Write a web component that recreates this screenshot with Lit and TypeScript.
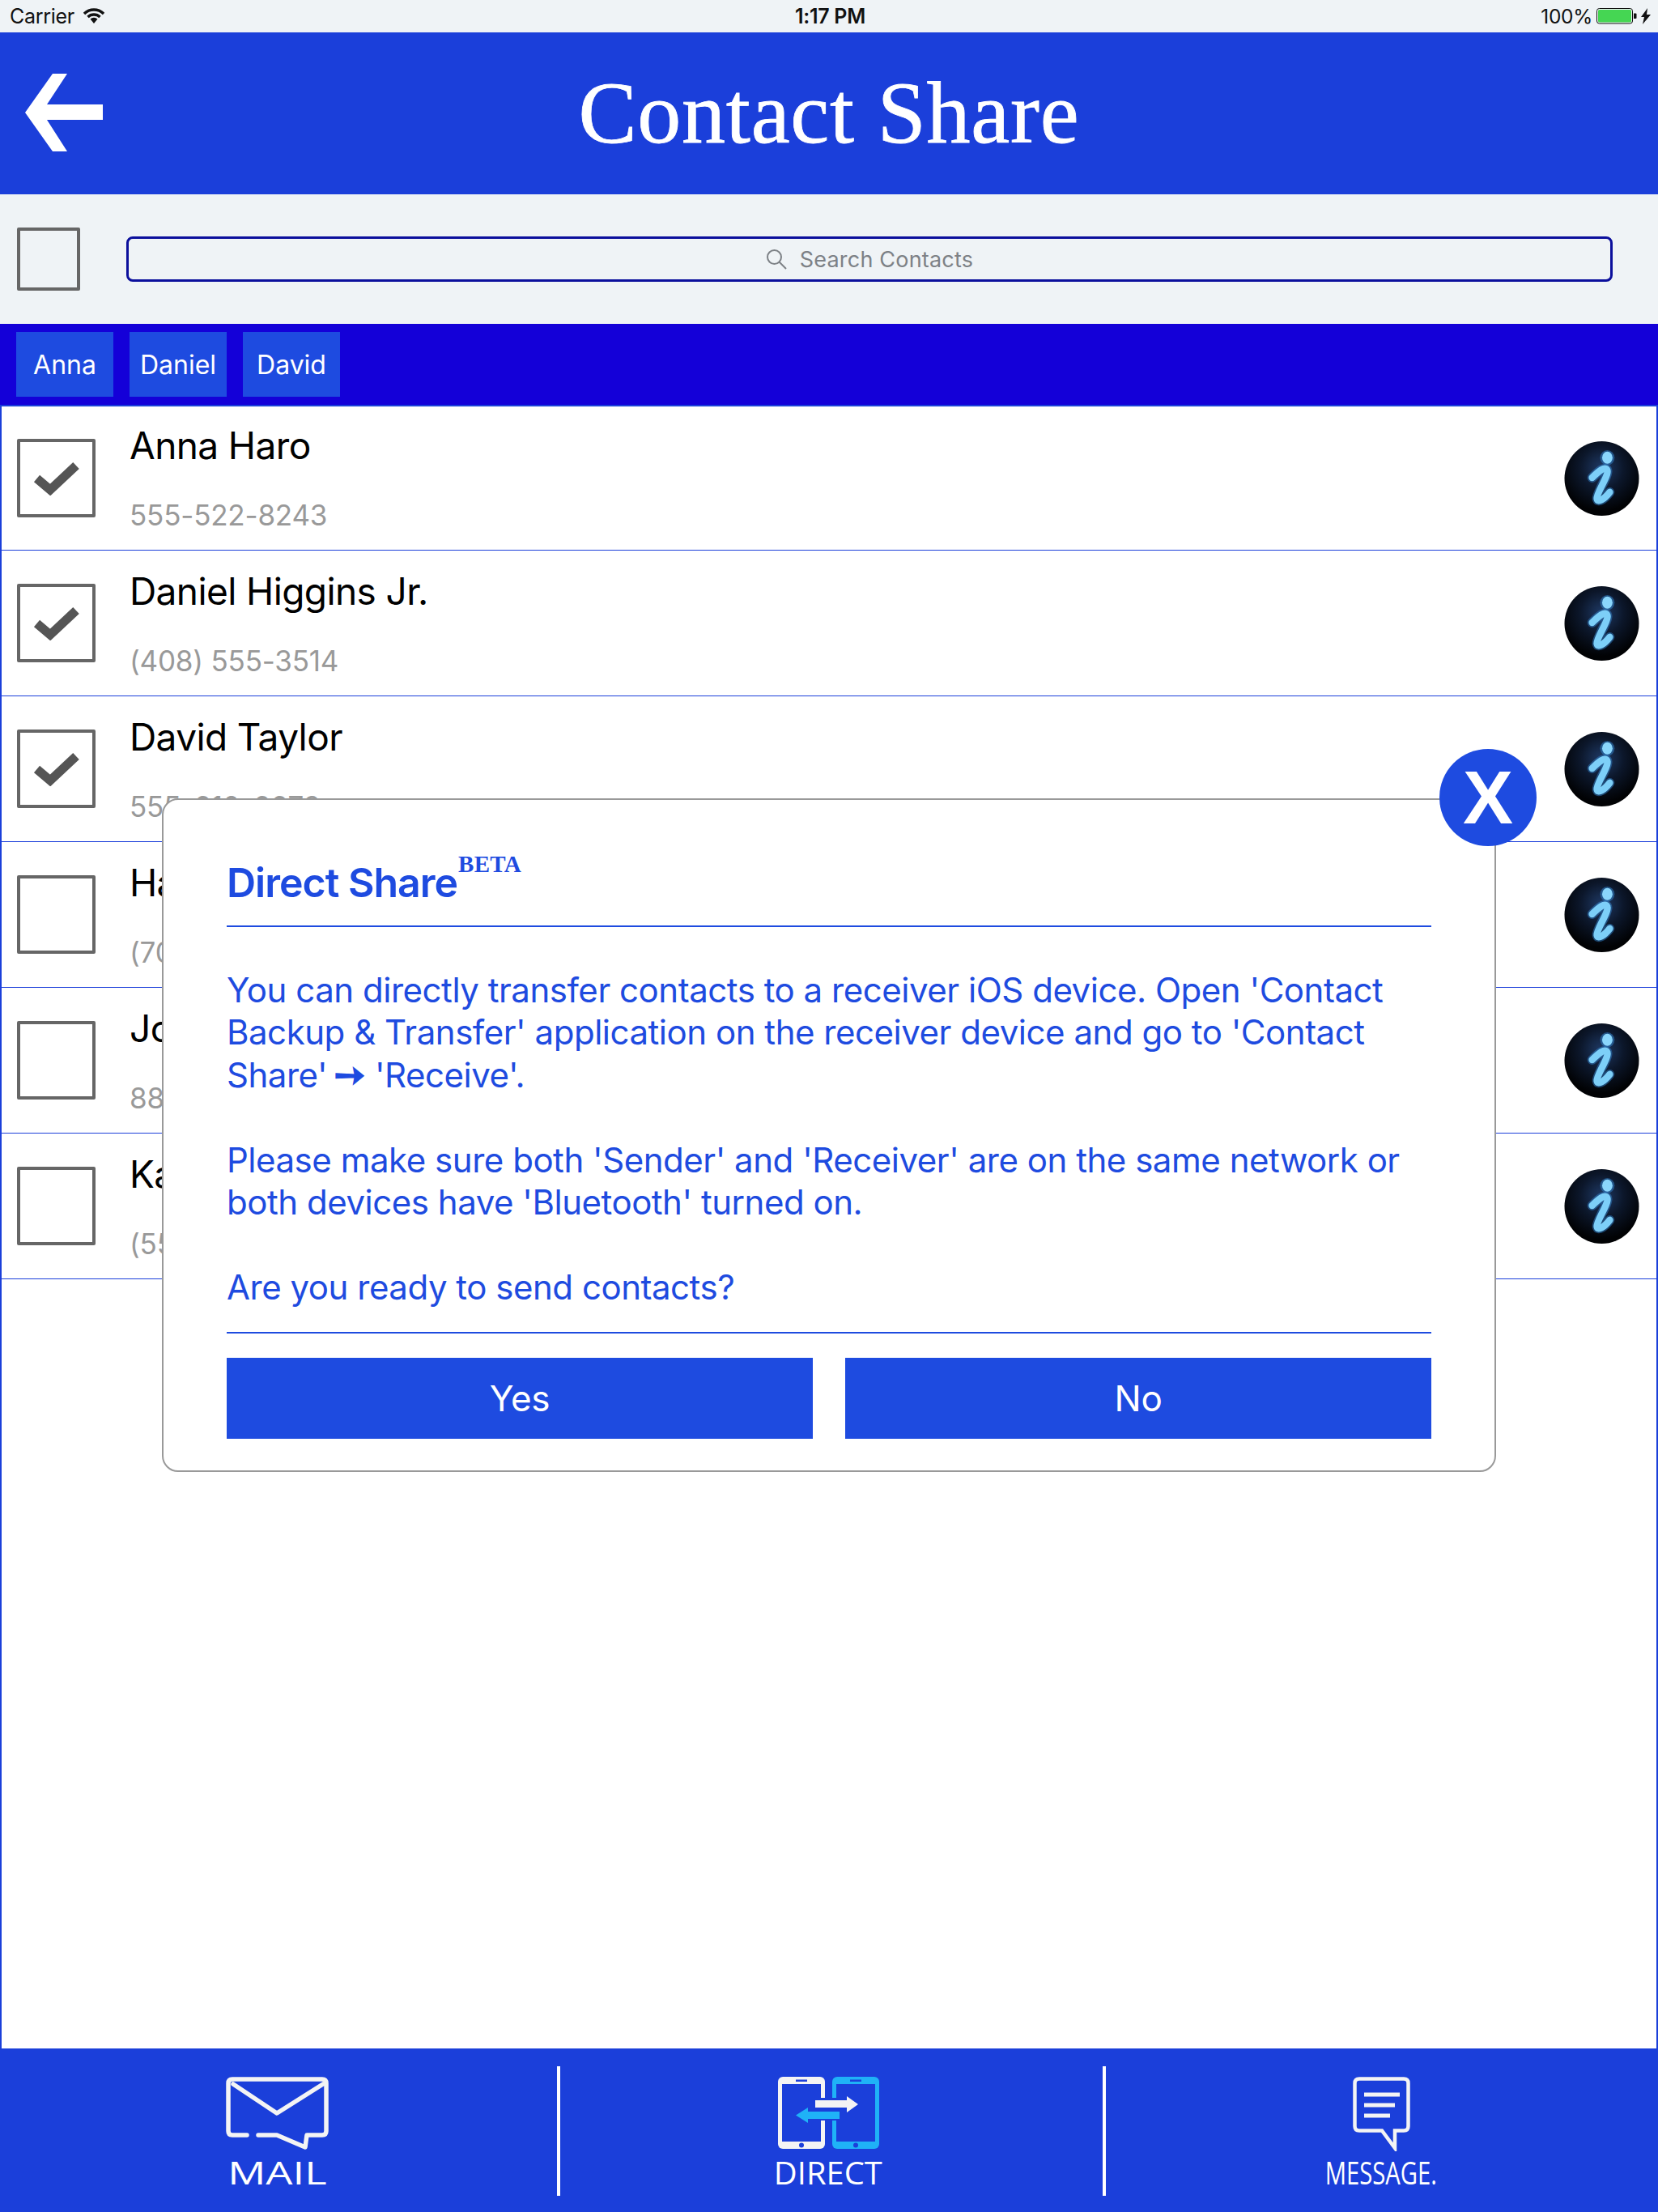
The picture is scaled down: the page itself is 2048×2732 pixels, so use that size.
import { LitElement, html, css, svg } from "lit";
import { customElement } from "lit/decorators.js";

const contacts = [
  { name: "Anna Haro", phone: "555-522-8243", on: true },
  { name: "Daniel Higgins Jr.", phone: "(408) 555-3514", on: true },
  { name: "David Taylor", phone: "555-610-6679", on: true },
  { name: "Hank M. Zakroff", phone: "(707) 555-1854", on: false },
  { name: "John Appleseed", phone: "888-555-5512", on: false },
  { name: "Kate Bell", phone: "(555) 564-8583", on: false },
];

const infoIcon = (id: number) => svg`<svg class="info" viewBox="0 0 94 94" width="93" height="94">
  <defs>
    <radialGradient id="b${id}" cx="50%" cy="36%" r="58%">
      <stop offset="0" stop-color="#1f3a66"/><stop offset=".5" stop-color="#0c172b"/><stop offset="1" stop-color="#010204"/>
    </radialGradient>
  </defs>
  <circle cx="47" cy="47" r="46.5" fill="url(#b${id})"/>
  <ellipse cx="54" cy="21" rx="9" ry="9.5" fill="#2f78bd" opacity=".6"/>
  <path d="M35 46 C42 39 52 30 54 37 C56 43 40 66 41 72 C42 78 50 73 57 64" fill="none" stroke="#2f78bd" stroke-width="12" stroke-linecap="round" opacity=".55"/>
  <ellipse cx="54" cy="21" rx="6.5" ry="7.5" fill="#8ad6fc"/>
  <path d="M35 46 C42 39 52 30 54 37 C56 43 40 66 41 72 C42 78 50 73 57 64" fill="none" stroke="#7dcff8" stroke-width="8.5" stroke-linecap="round"/>
</svg>`;

@customElement("app-root")
export class AppRoot extends LitElement {
  static styles = css`
    :host { display: block; width: 2048px; height: 2732px; position: relative; overflow: hidden; background: #fff; font-family: Inter, "Liberation Sans", sans-serif; }
    .page { display: flex; flex-direction: column; height: 2732px; }
    .status { height: 40px; flex: none; background: #eff3f6; display: grid; grid-template-columns: 1fr auto 1fr; align-items: center; padding: 0 9px 0 12px; font-size: 25px; color: #111; letter-spacing: -0.3px; }
    .status-l { display: flex; align-items: center; gap: 11px; }
    .status-c { font-weight: 600; font-size: 25px; }
    .status-r { display: flex; align-items: center; justify-content: flex-end; gap: 5px; font-size: 24.5px; }
    .batt { display: block; }
    .header { height: 200px; flex: none; background: #1b3fda; display: flex; align-items: center; position: relative; }
    .back { position: absolute; left: 31px; top: 51px; }
    .title { flex: 1; text-align: center; color: #fff; font-family: "Liberation Serif", serif; font-size: 108px; line-height: 200px; letter-spacing: 0.8px; -webkit-text-stroke: 0.8px #fff; }
    .search { height: 160px; flex: none; box-sizing: border-box; background: #eff3f6; display: flex; align-items: center; padding: 0 56px 0 21px; }
    .search .box { width: 70px; height: 70px; border: 4px solid #666; border-radius: 2px; flex: none; }
    .field { flex: 1; margin-left: 57px; height: 56px; box-sizing: border-box; border: 3px solid #0b0f9c; border-radius: 8px; display: flex; align-items: center; justify-content: center; gap: 16px; color: #7d8186; font-size: 27px; letter-spacing: 0.2px; }
    .field svg { display: block; }
    .chips { height: 100px; flex: none; box-sizing: border-box; background: #1400d8; padding: 10px 20px; display: flex; gap: 20px; }
    .chip { width: 120px; height: 80px; background: #1e4be0; color: #fff; font-size: 32px; display: flex; align-items: center; justify-content: center; }
    .list { flex: 1; border-top: 2px solid #1b3fda; border-left: 2px solid #1b3fda; border-right: 2px solid #1b3fda; background: #fff; }
    .row { height: 180px; box-sizing: border-box; border-bottom: 1px solid #1b3fda; display: flex; align-items: center; padding: 0 21px 0 19px; }
    .row:first-child { height: 178px; }
    .check { width: 97px; height: 97px; box-sizing: border-box; border: 4px solid #666; border-radius: 2px; flex: none; display: flex; align-items: center; justify-content: center; background: #fff; }
    .check svg { display: block; }
    .text { flex: 1; margin-left: 42px; display: flex; flex-direction: column; align-self: flex-start; padding-top: 20px; }
    .row:first-child .text { padding-top: 18px; }
    .name { font-size: 46px; color: #000; line-height: 60px; letter-spacing: -0.6px; }
    .phone { font-size: 35px; color: #999; line-height: 48px; margin-top: 32px; letter-spacing: -0.2px; }
    .info { display: block; flex: none; }
    .tabs { height: 202px; flex: none; background: #1b3fda; display: grid; grid-template-columns: 688px 4px 670px 4px 1fr; color: #fff; }
    .tab { display: flex; flex-direction: column; align-items: center; font-family: "Open Sans", sans-serif; font-size: 38px; box-sizing: border-box; padding-top: 35px; }
    .tab.mail { padding-right: 4px; }
    .tab.direct { padding-right: 8px; }
    .tab.message { padding-right: 2px; }
    .tab .ico { height: 95px; display: block; }
    .tab svg { display: block; }
    .tab span { display: block; line-height: 46px; white-space: nowrap; }
    .mail span { transform: scaleX(1.38); font-weight: 500; }
    .direct span { transform: scaleX(1.05); font-weight: 500; }
    .message span { transform: scaleX(0.77); }
    .sep { width: 4px; height: 160px; background: #fff; margin-top: 22px; }
    .modal { position: absolute; left: 200px; top: 986px; width: 1648px; height: 832px; box-sizing: border-box; background: #fff; border: 2px solid #999; border-radius: 20px; padding: 0 78px; color: #1e4be0; display: flex; flex-direction: column; }
    .m-title { height: 157px; flex: none; box-sizing: border-box; border-bottom: 2px solid #1e4be0; padding-top: 67px; font-size: 50px; font-weight: 600; line-height: 70px; display: flex; align-items: flex-start; letter-spacing: -1px; }
    .m-title sup { font-family: "Liberation Serif", serif; font-size: 29px; line-height: 30px; margin-top: -3px; margin-left: 1px; font-weight: 700; letter-spacing: 0.3px; }
    .m-body { height: 502px; flex: none; box-sizing: border-box; border-bottom: 2px solid #1e4be0; padding-top: 52px; font-size: 42px; line-height: 52.4px; white-space: pre-line; letter-spacing: -0.47px; }
    .m-body b { font-family: "DejaVu Sans", sans-serif; font-weight: 700; font-size: 46px; line-height: 40px; margin-left: -3px; margin-right: 1px; -webkit-text-stroke: 1.6px #1e4be0; }
    .m-btns { display: flex; gap: 40px; margin-top: 30px; }
    .m-btn { flex: 1; height: 100px; background: #1e4be0; color: #fff; font-size: 44px; letter-spacing: -0.3px; display: flex; align-items: center; justify-content: center; }
    .close { position: absolute; left: 1778px; top: 925px; width: 120px; height: 120px; border-radius: 50%; background: #1e4be0; color: #fff; font-family: "Liberation Sans", sans-serif; font-size: 93px; font-weight: 700; display: flex; align-items: center; justify-content: center; }
  `;

  render() {
    return html`
      <div class="page">
        <div class="status">
          <div class="status-l">Carrier
            <svg width="26" height="20" viewBox="0 0 26 20"><path d="M1 7 A17 17 0 0 1 25 7" fill="none" stroke="#111" stroke-width="3.4"/><path d="M5.5 11 A11 11 0 0 1 20.5 11" fill="none" stroke="#111" stroke-width="3.4"/><path d="M8.5 13.5 A6.5 6.5 0 0 1 17.5 13.5 L13 19 Z" fill="#111"/></svg>
          </div>
          <div class="status-c">1:17 PM</div>
          <div class="status-r">100%
            <svg class="batt" width="67" height="22" viewBox="0 0 67 22"><rect x="0.5" y="1.5" width="44" height="18.5" rx="3" fill="none" stroke="#111" stroke-width="1"/><rect x="2" y="3" width="41" height="15.5" rx="1.5" fill="#45d653"/><path d="M46 7.5h2.5q1 0 1 1v4.5q0 1 -1 1h-2.5z" fill="#111"/><path d="M63 1 L55 12 H59 L57 21 L67 9 H62 Z" fill="#111"/></svg>
          </div>
        </div>
        <div class="header">
          <svg class="back" width="96" height="96" viewBox="0 0 96 96"><path d="M34 0 H52 L27 38 H96 V57 H27 L52 96 H34 L0 48 Z" fill="#fff"/></svg>
          <div class="title">Contact Share</div>
        </div>
        <div class="search">
          <div class="box"></div>
          <div class="field">
            <svg width="26" height="26" viewBox="0 0 26 26"><circle cx="10.5" cy="10.5" r="8.5" fill="none" stroke="#7d8186" stroke-width="2"/><path d="M16.5 16.5 L25 25" stroke="#7d8186" stroke-width="2"/></svg>
            <span>Search Contacts</span>
          </div>
        </div>
        <div class="chips">
          <div class="chip">Anna</div><div class="chip">Daniel</div><div class="chip">David</div>
        </div>
        <div class="list">
          ${contacts.map((c, i) => html`
            <div class="row">
              <div class="check">${c.on ? html`<svg width="57" height="42" viewBox="0 0 57 42"><path d="M4.5 21 L21 35 L53 5" fill="none" stroke="#555" stroke-width="11"/></svg>` : ""}</div>
              <div class="text"><div class="name">${c.name}</div><div class="phone">${c.phone}</div></div>
              ${infoIcon(i)}
            </div>`)}
        </div>
        <div class="tabs">
          <div class="tab mail">
            <div class="ico"><svg width="127" height="90" viewBox="0 0 127 90" fill="none" stroke="#f4f4f4" stroke-width="5.5" stroke-linecap="round" stroke-linejoin="round"><path d="M26 72 H8 Q3 72 3 67 V8 Q3 3 8 3 H119 Q124 3 124 8 V67 Q124 72 119 72 H100 L98 87 L63 72 H40"/><path d="M9 9 L63 45 L120 9"/></svg></div>
            <span>MAIL</span>
          </div>
          <div class="sep"></div>
          <div class="tab direct">
            <div class="ico"><svg width="125" height="89" viewBox="0 0 125 89"><rect x="0" y="0" width="58" height="89" rx="6" fill="#f4f4f4"/><rect x="5" y="9" width="48" height="71" fill="#1b3fda"/><rect x="22" y="3.5" width="14" height="2.5" fill="#1b3fda"/><ellipse cx="29" cy="84.5" rx="3" ry="3" fill="#1b3fda"/><rect x="67" y="0" width="58" height="89" rx="6" fill="#1fb2f7"/><rect x="72" y="9" width="48" height="71" fill="#1b3fda"/><rect x="89" y="3.5" width="14" height="2.5" fill="#1b3fda"/><ellipse cx="96" cy="84.5" rx="3" ry="3" fill="#1b3fda"/><rect x="50" y="26" width="24" height="28" fill="#1b3fda"/><path d="M46 29 H85 V24 L99 34 L85 44 V38 H46 Z" fill="#f4f4f4"/><path d="M76 43 H37 V38 L22 47.5 L37 57 V52 H76 Z" fill="#1fb2f7"/></svg></div>
            <span>DIRECT</span>
          </div>
          <div class="sep"></div>
          <div class="tab message">
            <div class="ico"><svg width="71" height="92" viewBox="0 0 71 92" fill="none" stroke="#f4f4f4" stroke-width="4.5"><path d="M8 2.5 H63 Q68.5 2.5 68.5 8 V61 Q68.5 66.5 63 66.5 H52 V88 L36 66.5 H8 Q2.5 66.5 2.5 61 V8 Q2.5 2.5 8 2.5 Z" stroke-linejoin="miter"/><path d="M14 22 H58 M14 35 H52 M14 48 H46" stroke-width="5"/></svg></div>
            <span>MESSAGE.</span>
          </div>
        </div>
      </div>
      <div class="modal">
        <div class="m-title">Direct Share<sup>BETA</sup></div>
        <div class="m-body">You can directly transfer contacts to a receiver iOS device. Open 'Contact
Backup &amp; Transfer' application on the receiver device and go to 'Contact
Share' <b>➙</b> 'Receive'.

Please make sure both 'Sender' and 'Receiver' are on the same network or
both devices have 'Bluetooth' turned on.

Are you ready to send contacts?</div>
        <div class="m-btns"><div class="m-btn">Yes</div><div class="m-btn">No</div></div>
      </div>
      <div class="close">X</div>
    `;
  }
}
